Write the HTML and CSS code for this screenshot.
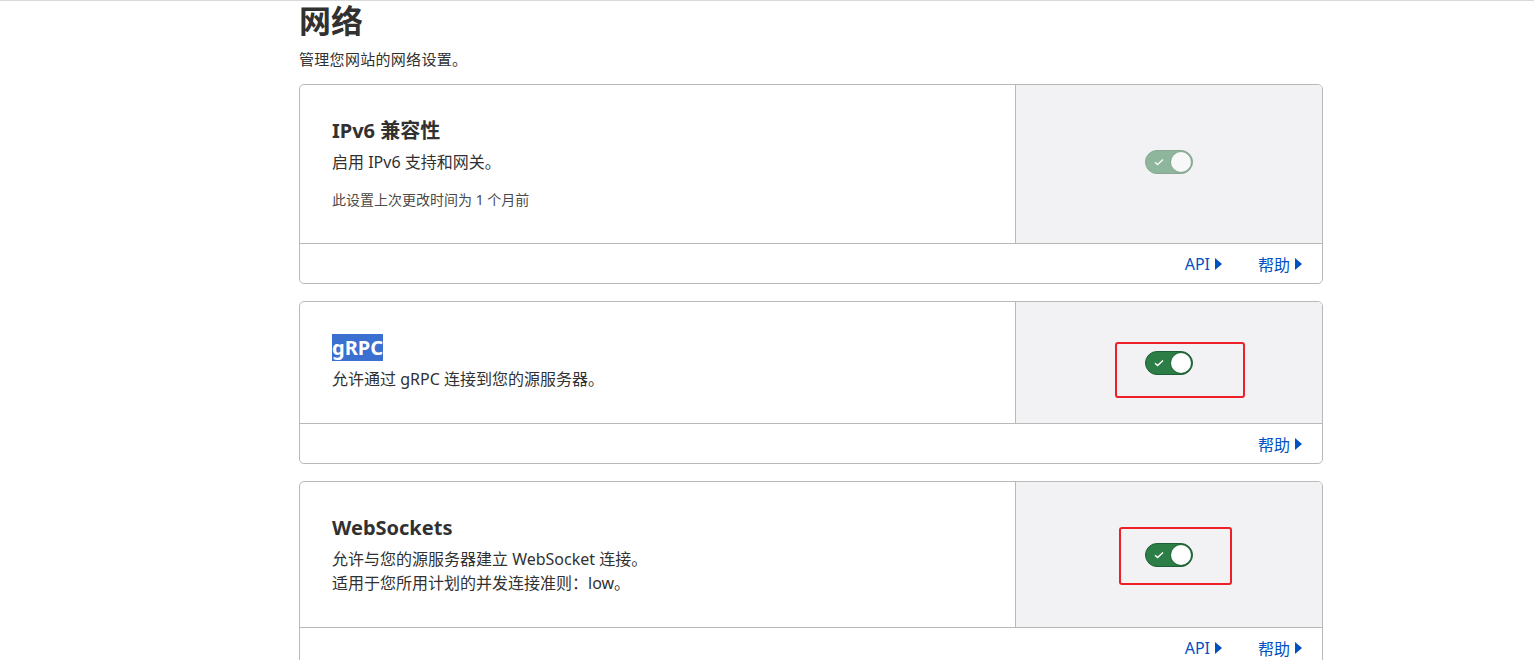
FILE: index.html
```html
<!DOCTYPE html>
<html lang="zh-CN">
<head>
    <meta charset="UTF-8">
    <meta name="viewport" content="width=device-width, initial-scale=1.0">
    <title>网络</title>
    <link rel="stylesheet" href="styles.css">
</head>
<body>

    <main class="page">
        <h1>网络</h1>
        <p class="subtitle">管理您网站的网络设置。</p>

        <section class="card">
            <div class="card-body">
                <div class="card-info">
                    <h2>IPv6 兼容性</h2>
                    <p class="desc">启用 IPv6 支持和网关。</p>
                    <p class="changed">此设置上次更改时间为 1 个月前</p>
                </div>
                <div class="card-control">
                    <span class="toggle on faded">
                        <svg class="check" viewBox="0 0 10 8"><path d="M1 4.2 3.6 6.6 9 1.4"/></svg>
                        <span class="knob"></span>
                    </span>
                </div>
            </div>
            <div class="card-footer">
                <a href="#">API <span class="caret"></span></a>
                <a href="#">帮助 <span class="caret"></span></a>
            </div>
        </section>

        <section class="card">
            <div class="card-body">
                <div class="card-info">
                    <h2><span class="selected">gRPC</span></h2>
                    <p class="desc">允许通过 gRPC 连接到您的源服务器。</p>
                </div>
                <div class="card-control">
                    <span class="toggle on">
                        <svg class="check" viewBox="0 0 10 8"><path d="M1 4.2 3.6 6.6 9 1.4"/></svg>
                        <span class="knob"></span>
                    </span>
                    <span class="mark mark-grpc"></span>
                </div>
            </div>
            <div class="card-footer">
                <a href="#">帮助 <span class="caret"></span></a>
            </div>
        </section>

        <section class="card">
            <div class="card-body">
                <div class="card-info">
                    <h2>WebSockets</h2>
                    <p class="desc">允许与您的源服务器建立 WebSocket 连接。<br>适用于您所用计划的并发连接准则：low。</p>
                </div>
                <div class="card-control">
                    <span class="toggle on">
                        <svg class="check" viewBox="0 0 10 8"><path d="M1 4.2 3.6 6.6 9 1.4"/></svg>
                        <span class="knob"></span>
                    </span>
                    <span class="mark mark-ws"></span>
                </div>
            </div>
            <div class="card-footer">
                <a href="#">API <span class="caret"></span></a>
                <a href="#">帮助 <span class="caret"></span></a>
            </div>
        </section>
    </main>

</body>
</html>
```

FILE: styles.css
```css
body {
    font-family: "Noto Sans", "Noto Sans CJK SC", sans-serif;
    color: #313131;
    background-color: #ffffff;
    margin: 0;
    padding: 0;
    border-top: 1px solid #d9d9d9;
}
.page {
    width: 1024px;
    margin-left: 299px;
}
h1 {
    font-size: 32px;
    line-height: 40px;
    font-weight: 700;
    margin: 0;
    color: #313131;
}
.subtitle {
    font-size: 15px;
    line-height: 20px;
    margin: 8px 0 15px 0;
    letter-spacing: 0.3px;
}
.card {
    border: 1px solid #b9b9b9;
    border-radius: 5px;
    margin-bottom: 17px;
    overflow: hidden;
}
.card-body {
    display: flex;
    border-bottom: 1px solid #b9b9b9;
}
.card-info {
    flex-grow: 1;
    padding: 32px;
    border-right: 1px solid #b9b9b9;
}
.card-info h2 {
    font-size: 20px;
    line-height: 28px;
    font-weight: 700;
    margin: 0 0 5px 0;
}
.selected {
    background-color: #3b6fd0;
    color: #ffffff;
}
.desc {
    font-size: 16px;
    line-height: 24px;
    margin: 0;
}
.changed {
    font-size: 14px;
    line-height: 22px;
    margin: 15px 0 0 0;
    color: #4a4a4a;
}
.card-control {
    width: 306px;
    flex-shrink: 0;
    background-color: #f2f1f4;
    display: flex;
    align-items: center;
    justify-content: center;
    position: relative;
}
.toggle {
    width: 48px;
    height: 24px;
    box-sizing: border-box;
    border-radius: 12px;
    border: 1px solid #1f5f35;
    background-color: #2c7d46;
    display: flex;
    align-items: center;
    justify-content: space-between;
    padding: 0 1px 0 8px;
}
.toggle.faded {
    opacity: 0.5;
    margin-top: -4px;
}
.check {
    width: 10px;
    height: 8px;
    fill: none;
    stroke: #ffffff;
    stroke-width: 1.4;
}
.knob {
    width: 20px;
    height: 20px;
    border-radius: 50%;
    background-color: #ffffff;
    box-shadow: 0 0 0 1px rgba(0, 0, 0, 0.15);
}
.mark {
    position: absolute;
    border: 2px solid #ee2027;
    border-radius: 3px;
}
.mark-grpc {
    left: 99px;
    top: 40px;
    width: 126px;
    height: 52px;
}
.mark-ws {
    left: 103px;
    top: 45px;
    width: 109px;
    height: 54px;
}
.card-footer {
    height: 39px;
    display: flex;
    align-items: center;
    justify-content: flex-end;
    gap: 36px;
    padding-right: 20px;
}
.card-footer a {
    color: #0051c3;
    text-decoration: none;
    font-size: 16px;
    display: flex;
    align-items: center;
    gap: 5px;
}
.caret {
    width: 0;
    height: 0;
    border-top: 6px solid transparent;
    border-bottom: 6px solid transparent;
    border-left: 7px solid #0051c3;
}
```
